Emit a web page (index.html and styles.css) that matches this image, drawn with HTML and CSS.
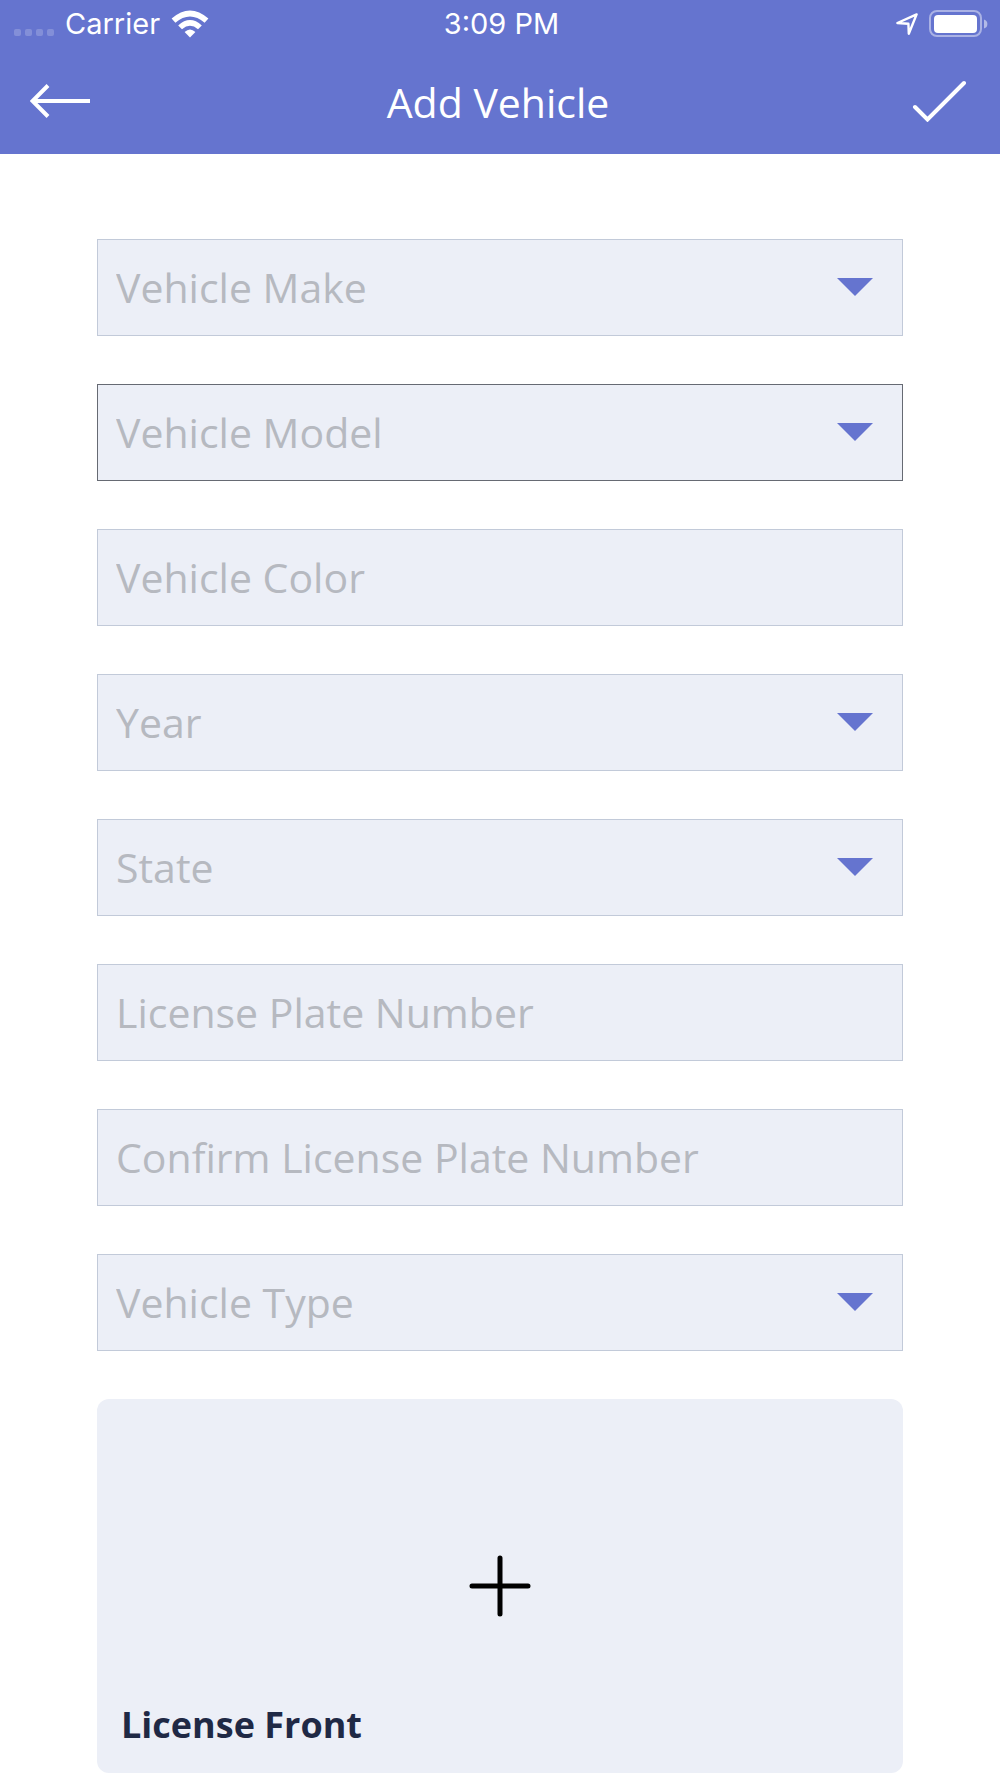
FILE: index.html
```html
<!DOCTYPE html>
<html lang="en">

<head>
    <meta charset="UTF-8">
    <meta name="viewport" content="width=device-width, initial-scale=1.0">
    <title>Add Vehicle</title>
    <link rel="stylesheet" href="styles.css">
</head>

<body>
    <header class="header">
        <div class="status">
            <div class="status-left">
                <div class="signal"><i></i><i></i><i></i><i></i></div>
                <span>Carrier</span>
                <svg class="wifi" width="38" height="28" viewBox="0 0 38 28">
                    <path d="M0.6 8.6Q19 -7.6 37.4 8.6L33.6 12.8Q19 0.4 4.4 12.8Z" fill="#fff" />
                    <path d="M7.2 15.4Q19 4.6 30.8 15.4L27 19.2Q19 12.4 11 19.2Z" fill="#fff" />
                    <path d="M13.6 22Q19 17 24.4 22L19 27.4Z" fill="#fff" />
                </svg>
            </div>
            <span class="time">3:09 PM</span>
            <div class="status-right">
                <svg width="22" height="22" viewBox="0 0 22 22" fill="none" stroke="#fff" stroke-width="2.4" stroke-linejoin="round">
                    <path d="M20.600 1.400L1.400 10L12.400 10.800L12.800 20.800Z" />
                </svg>
                <svg width="60" height="28" viewBox="0 0 60 28">
                    <rect x="1" y="1" width="51" height="25" rx="7" fill="none" stroke="#fff" stroke-opacity="0.45" stroke-width="2" />
                    <rect x="5" y="5" width="43" height="18" rx="4" fill="#fff" />
                    <path d="M55 9.5Q58.4 10.5 58.4 14T55 18.5Z" fill="#fff" fill-opacity="0.5" />
                </svg>
            </div>
        </div>
        <nav class="nav">
            <button class="nav-btn" type="button" aria-label="Back">
                <svg width="60" height="36" viewBox="0 0 60 36" fill="none" stroke="#fff" stroke-width="4">
                    <path d="M18 2.5L2.5 18L18 33.5M2.5 18H60" />
                </svg>
            </button>
            <h1 class="title">Add Vehicle</h1>
            <button class="nav-btn save" type="submit" form="vehicle" aria-label="Save">
                <svg width="54" height="42" viewBox="0 0 54 42" fill="none" stroke="#fff" stroke-width="4" stroke-linecap="round">
                    <path d="M3 27L15.5 39.5L52 3" />
                </svg>
            </button>
        </nav>
    </header>

    <form class="form" id="vehicle">
        <div class="field">
            <select aria-label="Vehicle Make">
                <option>Vehicle Make</option>
            </select>
            <svg class="arrow" width="36" height="18" viewBox="0 0 36 18"><path d="M0 0H36L18 18Z" /></svg>
        </div>
        <div class="field active">
            <select aria-label="Vehicle Model">
                <option>Vehicle Model</option>
            </select>
            <svg class="arrow" width="36" height="18" viewBox="0 0 36 18"><path d="M0 0H36L18 18Z" /></svg>
        </div>
        <div class="field">
            <input type="text" placeholder="Vehicle Color" aria-label="Vehicle Color">
        </div>
        <div class="field">
            <select aria-label="Year">
                <option>Year</option>
            </select>
            <svg class="arrow" width="36" height="18" viewBox="0 0 36 18"><path d="M0 0H36L18 18Z" /></svg>
        </div>
        <div class="field">
            <select aria-label="State">
                <option>State</option>
            </select>
            <svg class="arrow" width="36" height="18" viewBox="0 0 36 18"><path d="M0 0H36L18 18Z" /></svg>
        </div>
        <div class="field">
            <input type="text" placeholder="License Plate Number" aria-label="License Plate Number">
        </div>
        <div class="field">
            <input type="text" placeholder="Confirm License Plate Number" aria-label="Confirm License Plate Number">
        </div>
        <div class="field">
            <select aria-label="Vehicle Type">
                <option>Vehicle Type</option>
            </select>
            <svg class="arrow" width="36" height="18" viewBox="0 0 36 18"><path d="M0 0H36L18 18Z" /></svg>
        </div>
        <button class="upload" type="button">
            <svg width="62" height="62" viewBox="0 0 62 62" stroke="#000" stroke-width="5" stroke-linecap="round">
                <path d="M31 3V59M3 31H59" />
            </svg>
            <span>License Front</span>
        </button>
    </form>
</body>

</html>
```

FILE: styles.css
```css
* {
    box-sizing: border-box;
}

body {
    margin: 0;
    background-color: #fff;
    font-family: "Open Sans", "Noto Sans", sans-serif;
}

.header {
    background-color: #6574cf;
    color: #fff;
}

.status {
    display: grid;
    grid-template-columns: 1fr auto 1fr;
    align-items: center;
    height: 48px;
    padding: 0 11px 0 14px;
    font-family: Inter, sans-serif;
    font-size: 29px;
    line-height: 48px;
}

.status-left,
.status-right {
    display: flex;
    align-items: center;
    gap: 11px;
}

.status-right {
    justify-content: flex-end;
}

.signal {
    display: flex;
    gap: 4px;
    padding-top: 17px;
}

.signal i {
    width: 7px;
    height: 7px;
    border-radius: 2px;
    background-color: rgba(255, 255, 255, 0.2);
}

.nav {
    display: grid;
    grid-template-columns: 1fr auto 1fr;
    align-items: center;
    height: 106px;
    padding: 0 34px 0 30px;
}

.nav-btn {
    display: flex;
    justify-self: start;
    padding: 0;
    border: none;
    background: none;
    cursor: pointer;
}

.save {
    justify-self: end;
}

.title {
    margin: 0;
    padding-top: 2px;
    font-size: 41px;
    font-weight: 400;
    line-height: 56px;
}

.form {
    display: flex;
    flex-direction: column;
    gap: 48px;
    padding: 85px 97px 5px;
}

.field {
    display: grid;
    align-items: center;
    height: 97px;
    padding-bottom: 2px;
    border: 1px solid #c2cad9;
    background-color: #eceff7;
}

.field.active {
    border-color: #666a73;
}

/* the arrow shares the grid cell with its select */
.field select,
.field input,
.arrow {
    grid-area: 1 / 1;
}

.field select,
.field input {
    width: 100%;
    height: 100%;
    margin: 0;
    padding: 0 18px;
    border: none;
    border-radius: 0;
    outline: none;
    appearance: none;
    background: none;
    color: #b6b9c0;
    font-family: inherit;
    font-size: 41px;
}

.field input::placeholder {
    color: #b6b9c0;
}

.arrow {
    justify-self: end;
    margin-right: 29px;
    fill: #6574cf;
    pointer-events: none;
}

.upload {
    display: grid;
    grid-template-rows: 1fr auto 1fr;
    justify-items: center;
    height: 374px;
    padding: 0 24px;
    border: none;
    border-radius: 12px;
    background-color: #eceff7;
    color: #1f2945;
    font-family: inherit;
    font-size: 36px;
    font-weight: 700;
    line-height: 52px;
    cursor: pointer;
}

.upload svg {
    grid-row: 2;
}

.upload span {
    grid-row: 3;
    align-self: end;
    justify-self: start;
    padding-bottom: 22px;
}
```
